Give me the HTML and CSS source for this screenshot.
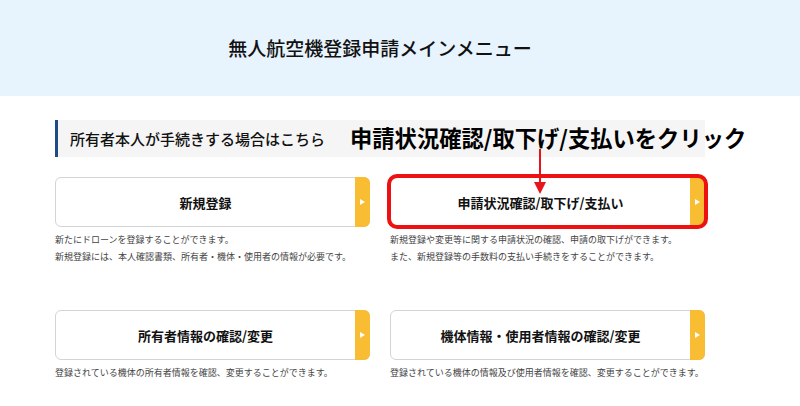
FILE: index.html
```html
<!DOCTYPE html>
<html lang="ja">
<head>
<meta charset="utf-8">
<title>無人航空機登録申請メインメニュー</title>
<link rel="stylesheet" href="styles.css">
</head>
<body>
<header class="hero">
  <div class="wrap hero-inner">
    <h1 class="hero-title">無人航空機登録申請メインメニュー</h1>
  </div>
</header>
<main class="wrap">
  <section class="section">
    <h2 class="section-head">所有者本人が手続きする場合はこちら</h2>
    <div class="note">申請状況確認/取下げ/支払いをクリック</div>
    <svg class="note-arrow" width="14" height="46" viewBox="0 0 14 46">
      <line x1="7" y1="0" x2="7" y2="36" stroke="#e8141b" stroke-width="2"/>
      <polygon points="1,33 13,33 7,45" fill="#e8141b"/>
    </svg>
    <div class="grid">
      <div class="item">
        <a class="card"><span class="card-label">新規登録</span><span class="card-tab"></span></a>
        <p class="desc">新たにドローンを登録することができます。<br>新規登録には、本人確認書類、所有者・機体・使用者の情報が必要です。</p>
      </div>
      <div class="item">
        <a class="card card-marked"><span class="card-label">申請状況確認/取下げ/支払い</span><span class="card-tab"></span></a>
        <p class="desc">新規登録や変更等に関する申請状況の確認、申請の取下げができます。<br>また、新規登録等の手数料の支払い手続きをすることができます。</p>
      </div>
      <div class="item">
        <a class="card"><span class="card-label">所有者情報の確認/変更</span><span class="card-tab"></span></a>
        <p class="desc">登録されている機体の所有者情報を確認、変更することができます。</p>
      </div>
      <div class="item">
        <a class="card"><span class="card-label">機体情報・使用者情報の確認/変更</span><span class="card-tab"></span></a>
        <p class="desc">登録されている機体の情報及び使用者情報を確認、変更することができます。</p>
      </div>
    </div>
  </section>
</main>
</body>
</html>
```
FILE: styles.css
```css
* { box-sizing: border-box; }
html, body {
  margin: 0;
  padding: 0;
  background: #ffffff;
  font-family: "Noto Sans CJK JP", "Noto Sans", sans-serif;
  color: #111;
}
.wrap {
  width: 650px;
  margin-left: 55px;
}
.hero {
  background: #e7f3fd;
  height: 96px;
}
.hero-inner {
  height: 96px;
  display: flex;
  align-items: center;
  justify-content: center;
}
.hero-title {
  margin: 0 0 2px 0;
  font-size: 19px;
  font-weight: 500;
  color: #111;
}
.section {
  position: relative;
  padding-top: 24px;
}
.section-head {
  margin: 0;
  height: 37px;
  display: flex;
  align-items: center;
  padding-left: 12px;
  border-left: 3px solid #1e4b86;
  background: #f5f5f5;
  font-size: 15px;
  font-weight: 500;
  color: #111;
}
.note {
  position: absolute;
  left: 295px;
  top: 24px;
  height: 34px;
  display: flex;
  align-items: center;
  font-size: 22.3px;
  font-weight: 700;
  color: #000;
  white-space: nowrap;
}
.note-arrow {
  position: absolute;
  left: 478px;
  top: 53px;
  z-index: 5;
}
.grid {
  display: grid;
  grid-template-columns: 315px 315px;
  column-gap: 20px;
  row-gap: 45px;
  margin-top: 20px;
}
.card {
  position: relative;
  display: flex;
  height: 50px;
  border: 1px solid #d4d4d4;
  border-radius: 6px;
  background: #fff;
}
.card-label {
  flex: 1;
  display: flex;
  align-items: center;
  justify-content: center;
  font-size: 13px;
  font-weight: 700;
  color: #111;
}
.card-tab {
  width: 15px;
  margin: -1px -1px -1px 0;
  background: #f8bd33;
  border-radius: 0 6px 6px 0;
  display: flex;
  align-items: center;
  justify-content: center;
}
.card-tab::before {
  content: "";
  width: 0;
  height: 0;
  border-top: 3px solid transparent;
  border-bottom: 3px solid transparent;
  border-left: 5px solid #fff;
}
.card-marked::after {
  content: "";
  position: absolute;
  left: -4px;
  right: -4px;
  top: -4px;
  bottom: -3px;
  border: 4px solid #ee1111;
  border-radius: 10px;
  pointer-events: none;
}
.desc {
  margin: 4px 0 0 0;
  font-size: 9px;
  line-height: 17px;
  color: #444;
  white-space: nowrap;
}
```
